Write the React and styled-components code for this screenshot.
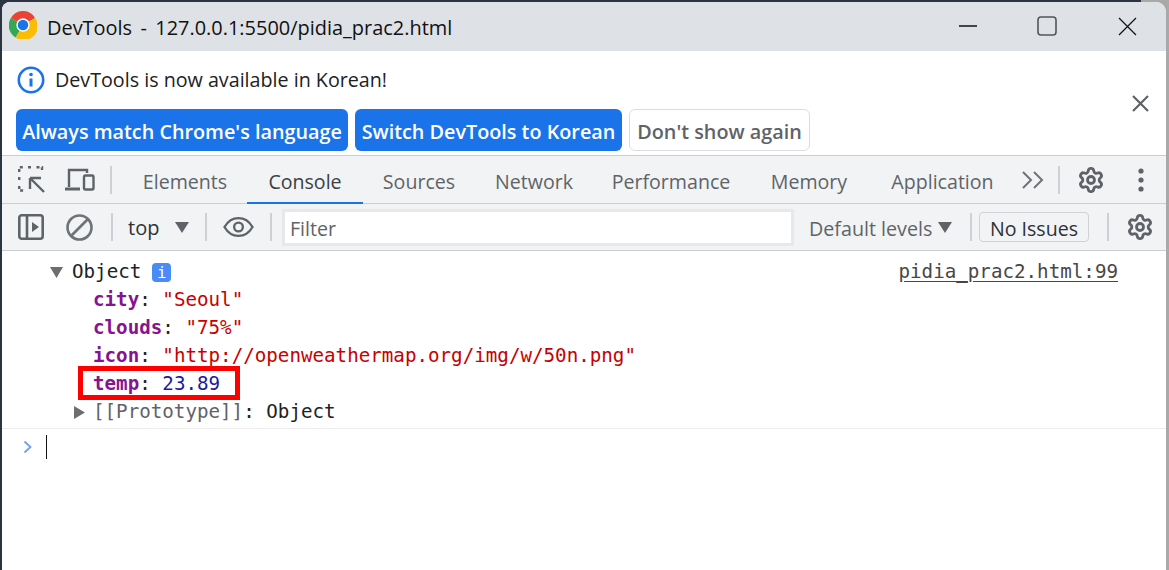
import styled, { createGlobalStyle } from "styled-components";
import { Settings } from "lucide-react";

const GlobalStyle = createGlobalStyle`
  html, body {
    margin: 0;
    padding: 0;
    width: 1169px;
    height: 570px;
    overflow: hidden;
    background: #fff;
  }
  * { box-sizing: border-box; }
`;

const Desktop = styled.div`
  width: 1169px;
  height: 570px;
  padding: 2px 3px 0 2px;
  background: linear-gradient(to right, #2b3440 1141px, #a9a9a9 1141px);
  font-family: "Open Sans", "Noto Sans", sans-serif;
`;

const Window = styled.div`
  width: 100%;
  height: 100%;
  display: flex;
  flex-direction: column;
  background: #fff;
  border-radius: 8px 10px 0 0;
  overflow: hidden;
`;

const TitleBar = styled.div`
  height: 49px;
  flex: none;
  display: flex;
  align-items: center;
  background: #dee1e6;
  padding: 0 29px 0 7px;
`;

const Logo = styled.svg`
  flex: none;
  display: block;
  margin-bottom: 3px;
`;

const Title = styled.div`
  flex: 1;
  margin-left: 10px;
  font-size: 19.95px;
  word-spacing: -1px;
  color: #111;
  white-space: pre;
  position: relative;
  top: 1px;
`;

const WinButton = styled.svg`
  flex: none;
  display: block;
  margin-left: ${(p) => p.$gap}px;
  margin-bottom: ${(p) => p.$lift || 0}px;
`;

const InfoBar = styled.div`
  height: 105px;
  flex: none;
  border-bottom: 1px solid #cbcdd1;
  padding: 15px 17px 0 14px;
  display: grid;
  grid-template-columns: 1fr auto;
  align-items: start;
`;

const InfoMain = styled.div`
  display: flex;
  flex-direction: column;
`;

const InfoLine = styled.div`
  display: flex;
  align-items: center;
  gap: 10px;
  height: 27px;
  margin-left: 1px;
  font-size: 19.7px;
  color: #202124;
`;

const InfoActions = styled.div`
  display: flex;
  gap: 7px;
  margin-top: 16px;
`;

const ActionButton = styled.button`
  height: 42px;
  width: ${(p) => p.$w}px;
  padding: 2px 0 0;
  font-family: inherit;
  font-size: 19.8px;
  font-weight: 600;
  white-space: nowrap;
  border-radius: 6px;
  border: ${(p) => (p.$plain ? "1px solid #dadce0" : "none")};
  background: ${(p) => (p.$plain ? "#fff" : "#1a73e8")};
  color: ${(p) => (p.$plain ? "#5f6368" : "#fff")};
`;

const CloseInfo = styled.svg`
  display: block;
  margin-top: 29px;
`;

const Toolbar = styled.div`
  flex: none;
  height: ${(p) => p.$h}px;
  display: flex;
  align-items: center;
  background: #f1f3f4;
  border-bottom: 1px solid #cbcdd1;
  padding-left: 16px;
`;

const ToolIcon = styled.svg`
  flex: none;
  display: block;
  margin-left: ${(p) => p.$gap || 0}px;
`;

const GearIcon = styled(Settings)`
  flex: none;
  display: block;
  margin-left: ${(p) => p.$gap}px;
  color: #5f6368;
`;

const Sep = styled.div`
  flex: none;
  width: 2px;
  height: 28px;
  background: #cdd0d4;
  margin-left: ${(p) => p.$gap}px;
`;

const Tabs = styled.div`
  display: flex;
  height: 100%;
  margin-left: 11px;
`;

const Tab = styled.div`
  width: ${(p) => p.$w}px;
  display: flex;
  align-items: center;
  justify-content: center;
  font-size: 19.6px;
  color: ${(p) => (p.$active ? "#3c4043" : "#5f6368")};
  border-bottom: 2px solid ${(p) => (p.$active ? "#1a73e8" : "transparent")};
  margin-bottom: -1px;
  padding-top: 4px;
`;

const Top = styled.div`
  margin-left: 15px;
  font-size: 20px;
  color: #303134;
  width: 47px;
  padding-top: 1px;
`;

const FilterBox = styled.div`
  flex: none;
  width: 512px;
  height: 37px;
  margin-left: 10px;
  background: #fff;
  border: 3px solid #e6e8ea;
  display: flex;
  align-items: center;
  padding: 3px 0 0 5px;
  font-size: 19.6px;
  color: #5f6368;
`;

const Levels = styled.div`
  margin-left: 15px;
  width: 125px;
  font-size: 19.7px;
  color: #5f6368;
  white-space: nowrap;
  padding-top: 2px;
`;

const IssuesButton = styled.div`
  flex: none;
  width: 110px;
  height: 30px;
  margin-left: 7px;
  border: 1px solid #cfd1d5;
  border-radius: 4px;
  display: flex;
  align-items: center;
  justify-content: center;
  padding-top: 2px;
  font-size: 19.6px;
  color: #303134;
`;

const Console = styled.div`
  flex: 1;
  padding-top: 7px;
  font-family: "DejaVu Sans Mono", monospace;
  font-size: 19.2px;
  line-height: 28px;
`;

const Row = styled.div`
  position: relative;
  height: 28px;
  display: flex;
  align-items: center;
  white-space: pre;
  padding-left: ${(p) => p.$indent}px;
  color: #222;
`;

const Source = styled.span`
  margin-left: auto;
  margin-right: 48px;
  color: #474747;
  text-decoration: underline;
  text-underline-offset: 3px;
`;

const Triangle = styled.svg`
  flex: none;
  display: block;
  margin-right: ${(p) => p.$gap}px;
`;

const InfoBadge = styled.span`
  width: 19px;
  height: 19px;
  margin-left: 11px;
  border-radius: 4px;
  background: #4a8cf7;
  color: #fff;
  font-size: 16px;
  line-height: 19px;
  text-align: center;
`;

const Key = styled.span`
  color: #881391;
  font-weight: 700;
`;

const Str = styled.span`
  color: #c80000;
`;

const Num = styled.span`
  color: #1a1aa6;
`;

const Muted = styled.span`
  color: #5f6368;
`;

const RedBox = styled.div`
  position: absolute;
  left: 76px;
  top: -4px;
  width: 162px;
  height: 34px;
  border: 5px solid #fe0000;
`;

const Prompt = styled.div`
  height: 36px;
  margin-top: 2px;
  border-top: 1px solid #ececec;
  display: flex;
  align-items: center;
  padding-left: 21px;
`;

const Caret = styled.div`
  width: 1px;
  height: 24px;
  margin-left: 13px;
  background: #111;
`;

const DownArrow = ({ gap }) => (
  <ToolIcon $gap={gap} width="14" height="11" viewBox="0 0 14 11">
    <path d="M0 0h14L7 11z" fill="#5f6368" />
  </ToolIcon>
);

const tabs = [
  ["Elements", 124],
  ["Console", 116],
  ["Sources", 112],
  ["Network", 118],
  ["Performance", 156],
  ["Memory", 120],
  ["Application", 147],
];

export default function App() {
  return (
    <>
      <GlobalStyle />
      <Desktop>
        <Window>
          <TitleBar>
            <Logo width="28" height="28" viewBox="0 0 48 48">
              <path d="M24 24 L11.5 45.6 A24 24 0 0 1 3.2 12 Z" fill="#34a853" />
              <path d="M24 24 L3.2 12 A24 24 0 0 1 44.8 12 Z" fill="#ea4335" />
              <path d="M24 24 L44.8 12 A24 24 0 0 1 11.5 45.6 Z" fill="#fbbc04" />
              <circle cx="24" cy="24" r="11.5" fill="#fff" />
              <circle cx="24" cy="24" r="9" fill="#1a73e8" />
            </Logo>
            <Title>DevTools  -  127.0.0.1:5500/pidia_prac2.html</Title>
            <WinButton $lift={1} width="18" height="2" viewBox="0 0 18 2">
              <path d="M0 1h18" stroke="#111" strokeWidth="1.3" />
            </WinButton>
            <WinButton $gap={60} $lift={2} width="20" height="20" viewBox="0 0 20 20" fill="none">
              <rect x="1" y="1" width="18" height="18" rx="3" stroke="#555" strokeWidth="1.6" />
            </WinButton>
            <WinButton $gap={61} width="19" height="19" viewBox="0 0 19 19">
              <path d="M1 1l17 17M18 1L1 18" stroke="#111" strokeWidth="1.2" />
            </WinButton>
          </TitleBar>

          <InfoBar>
            <InfoMain>
              <InfoLine>
                <svg width="28" height="28" viewBox="0 0 28 28" fill="none">
                  <circle cx="14" cy="14" r="12.2" stroke="#1a73e8" strokeWidth="2.6" />
                  <path d="M14 12.5v8" stroke="#1a73e8" strokeWidth="3" />
                  <circle cx="14" cy="8.5" r="1.8" fill="#1a73e8" />
                </svg>
                DevTools is now available in Korean!
              </InfoLine>
              <InfoActions>
                <ActionButton $w={332}>Always match Chrome's language</ActionButton>
                <ActionButton $w={267}>Switch DevTools to Korean</ActionButton>
                <ActionButton $w={181} $plain>Don't show again</ActionButton>
              </InfoActions>
            </InfoMain>
            <CloseInfo width="17" height="17" viewBox="0 0 17 17">
              <path d="M1 1l15 15M16 1L1 16" stroke="#5f6368" strokeWidth="2.2" />
            </CloseInfo>
          </InfoBar>

          <Toolbar $h={48}>
            <ToolIcon width="27" height="27" viewBox="0 0 27 27" fill="none" stroke="#5f6368" strokeWidth="2.4">
              <path d="M1.2 11v4M1.2 20v4.500h4M1.200 6V1.200H6M10 1.200h4M18.500 1.200H24v4.500" strokeDasharray="3 2.400" />
              <path d="M12 12h11M12 12v11M12.500 12.500L26 26" />
            </ToolIcon>
            <ToolIcon $gap={20} width="30" height="24" viewBox="0 0 30 24" fill="none" stroke="#5f6368" strokeWidth="2.4">
              <path d="M4 19V2h18v3" />
              <path d="M0 21h15" strokeWidth="3" />
              <rect x="19" y="7.500" width="9.500" height="14" rx="1.500" />
            </ToolIcon>
            <Sep $gap={15} />
            <Tabs>
              {tabs.map(([name, w]) => (
                <Tab key={name} $w={w} $active={name === "Console"}>{name}</Tab>
              ))}
            </Tabs>
            <ToolIcon $gap={6} width="22" height="18" viewBox="0 0 22 18" fill="none" stroke="#6f7377" strokeWidth="2">
              <path d="M1 1l8 8-8 8M12 1l8 8-8 8" />
            </ToolIcon>
            <Sep $gap={14} />
            <GearIcon $gap={17} size={28} strokeWidth={2.4} />
            <ToolIcon $gap={33} width="6" height="24" viewBox="0 0 6 24" fill="#5f6368">
              <circle cx="3" cy="3" r="2.600" />
              <circle cx="3" cy="12" r="2.600" />
              <circle cx="3" cy="21" r="2.600" />
            </ToolIcon>
          </Toolbar>

          <Toolbar $h={47}>
            <ToolIcon width="26" height="26" viewBox="0 0 26 26" fill="none" stroke="#5f6368" strokeWidth="2.600">
              <rect x="1.300" y="1.300" width="23.400" height="23.400" rx="2.500" />
              <path d="M9 1v24" />
              <path d="M14 8l7 5-7 5z" fill="#5f6368" stroke="none" />
            </ToolIcon>
            <ToolIcon $gap={22} width="27" height="27" viewBox="0 0 27 27" fill="none" stroke="#6f7377" strokeWidth="2.600">
              <circle cx="13.500" cy="13.500" r="12" />
              <path d="M5 22L22 5" />
            </ToolIcon>
            <Sep $gap={18} />
            <Top>top</Top>
            <DownArrow gap={0} />
            <Sep $gap={16} />
            <ToolIcon $gap={16} width="31" height="22" viewBox="0 0 32 22" fill="none" stroke="#5f6368" strokeWidth="2.400">
              <path d="M1.500 11C5 5 10 1.800 16 1.800S27 5 30.500 11C27 17 22 20.200 16 20.200S5 17 1.500 11z" />
              <circle cx="16" cy="11" r="4.500" />
            </ToolIcon>
            <Sep $gap={16} />
            <FilterBox>Filter</FilterBox>
            <Levels>Default levels</Levels>
            <DownArrow gap={4} />
            <Sep $gap={18} />
            <IssuesButton>No Issues</IssuesButton>
            <Sep $gap={18} />
            <GearIcon $gap={17} size={28} strokeWidth={2.4} />
          </Toolbar>

          <Console>
            <Row $indent={48}>
              <Triangle $gap={9} width="13" height="11" viewBox="0 0 13 11">
                <path d="M0 0h13L6.500 11z" fill="#6e6e6e" />
              </Triangle>
              Object
              <InfoBadge>i</InfoBadge>
              <Source>pidia_prac2.html:99</Source>
            </Row>
            <Row $indent={91}>
              <Key>city</Key>: <Str>"Seoul"</Str>
            </Row>
            <Row $indent={91}>
              <Key>clouds</Key>: <Str>"75%"</Str>
            </Row>
            <Row $indent={91}>
              <Key>icon</Key>: <Str>"http://openweathermap.org/img/w/50n.png"</Str>
            </Row>
            <Row $indent={91}>
              <Key>temp</Key>: <Num>23.89</Num>
              <RedBox />
            </Row>
            <Row $indent={72}>
              <Triangle $gap={8} width="11" height="13" viewBox="0 0 11 13">
                <path d="M0 0v13l11-6.500z" fill="#6e6e6e" />
              </Triangle>
              <Muted>[[Prototype]]</Muted>: Object
            </Row>
            <Prompt>
              <svg width="10" height="14" viewBox="0 0 10 14" fill="none">
                <path d="M1.500 1.500L7.500 7l-6 5.500" stroke="#6f9ff0" strokeWidth="1.800" />
              </svg>
              <Caret />
            </Prompt>
          </Console>
        </Window>
      </Desktop>
    </>
  );
}
